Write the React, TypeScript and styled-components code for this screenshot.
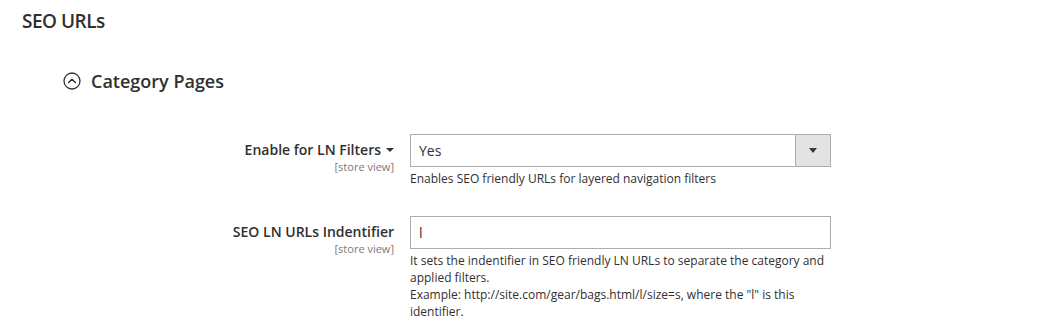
import styled, { createGlobalStyle } from "styled-components";

const GlobalStyle = createGlobalStyle`
  html, body {
    margin: 0;
    padding: 0;
    background: #ffffff;
  }
  body {
    font-family: "Open Sans", "Liberation Sans", Arial, sans-serif;
    color: #303030;
  }
`;

const fields = [
  {
    id: "enable",
    label: "Enable for LN Filters",
    hasCaret: true,
    scope: "[store view]",
    kind: "select" as const,
    value: "Yes",
    notes: ["Enables SEO friendly URLs for layered navigation filters"],
  },
  {
    id: "identifier",
    label: "SEO LN URLs Indentifier",
    hasCaret: false,
    scope: "[store view]",
    kind: "text" as const,
    value: "l",
    notes: [
      "It sets the indentifier in SEO friendly LN URLs to separate the category and applied filters.",
      'Example: http://site.com/gear/bags.html/l/size=s, where the "l" is this identifier.',
    ],
  },
];

const CollapseIcon = () => (
  <svg width="18" height="18" viewBox="0 0 18 18" aria-hidden="true">
    <circle cx="9" cy="9" r="8" fill="none" stroke="#303030" strokeWidth="1.3" />
    <path d="M5.6 10.6 L9 7.2 L12.4 10.6" fill="none" stroke="#303030" strokeWidth="1.4" strokeLinecap="round" strokeLinejoin="round" />
  </svg>
);

export default function App() {
  return (
    <Page>
      <GlobalStyle />
      <SectionTitle>SEO URLs</SectionTitle>
      <GroupHeader>
        <CollapseIcon />
        <GroupTitle>Category Pages</GroupTitle>
      </GroupHeader>
      <Fieldset>
        {fields.map((f) => (
          <Row key={f.id}>
            <LabelCell>
              <Label>
                {f.label}
                {f.hasCaret && <Caret />}
              </Label>
              <Scope>{f.scope}</Scope>
            </LabelCell>
            <Control>
              {f.kind === "select" ? (
                <SelectBox>
                  <SelectValue>{f.value}</SelectValue>
                  <SelectButton>
                    <SelectArrow />
                  </SelectButton>
                </SelectBox>
              ) : (
                <TextInput defaultValue={f.value} />
              )}
              <Note>
                {f.notes.map((n, i) => (
                  <div key={i}>{n}</div>
                ))}
              </Note>
            </Control>
          </Row>
        ))}
      </Fieldset>
    </Page>
  );
}

const Page = styled.div`
  padding: 9px 22px 0;
`;

const SectionTitle = styled.h2`
  margin: 0;
  font-size: 19px;
  line-height: 24px;
  font-weight: 600;
  letter-spacing: -0.5px;
  color: #303030;
`;

const GroupHeader = styled.div`
  display: flex;
  align-items: center;
  gap: 10px;
  margin: 36px 0 0 41px;
`;

const GroupTitle = styled.h3`
  margin: 0;
  font-size: 18px;
  line-height: 24px;
  font-weight: 600;
  color: #303030;
`;

const Fieldset = styled.div`
  display: flex;
  flex-direction: column;
  gap: 29px;
  margin-top: 41px;
`;

const Row = styled.div`
  display: grid;
  grid-template-columns: 372px 421px;
  column-gap: 16px;
`;

const LabelCell = styled.div`
  display: flex;
  flex-direction: column;
  align-items: flex-end;
  padding-top: 6px;
`;

const Label = styled.span`
  display: flex;
  align-items: center;
  font-size: 14px;
  line-height: 20px;
  font-weight: 600;
  color: #303030;
`;

const Caret = styled.span`
  margin-left: 5px;
  width: 0;
  height: 0;
  border-left: 4px solid transparent;
  border-right: 4px solid transparent;
  border-top: 4px solid #303030;
`;

const Scope = styled.span`
  font-size: 11px;
  line-height: 13px;
  color: #7a7a7a;
`;

const Control = styled.div`
  display: flex;
  flex-direction: column;
`;

const SelectBox = styled.div`
  display: flex;
  height: 33px;
  box-sizing: border-box;
  border: 1px solid #adadad;
  background: #fff;
`;

const SelectValue = styled.span`
  flex: 1;
  display: flex;
  align-items: center;
  padding-left: 8px;
  font-size: 14px;
  color: #303030;
`;

const SelectButton = styled.span`
  width: 34px;
  display: flex;
  align-items: center;
  justify-content: center;
  background: #e3e3e3;
  border-left: 1px solid #adadad;
`;

const SelectArrow = styled.span`
  width: 0;
  height: 0;
  border-left: 4px solid transparent;
  border-right: 4px solid transparent;
  border-top: 5px solid #41362f;
`;

const TextInput = styled.input`
  height: 33px;
  box-sizing: border-box;
  border: 1px solid #adadad;
  border-radius: 0;
  padding: 0 8px;
  font-family: inherit;
  font-size: 14px;
  color: #303030;
  outline: none;
`;

const Note = styled.div`
  margin-top: 3px;
  font-size: 12px;
  line-height: 17px;
  color: #303030;
`;
